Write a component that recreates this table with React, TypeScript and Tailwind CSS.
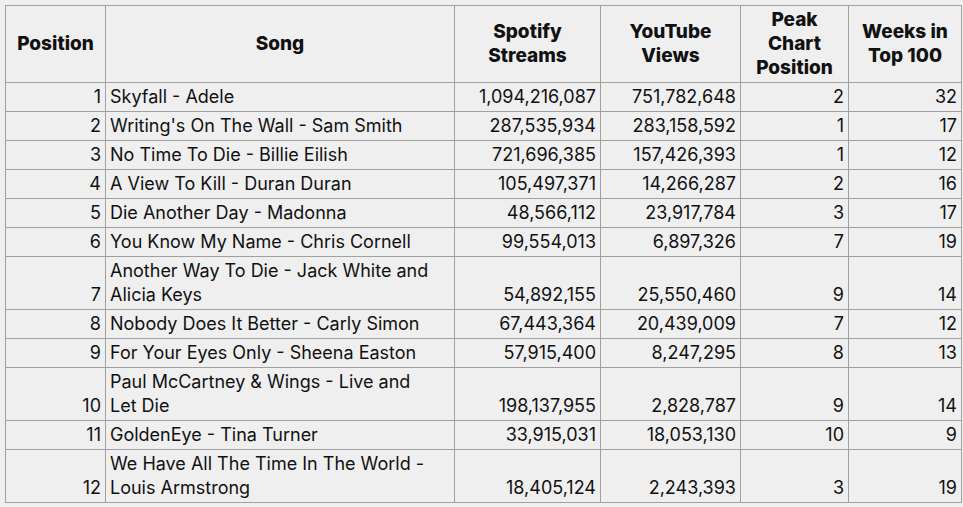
const rows: [number, string[], string, string, number, number][] = [
  [1, ["Skyfall - Adele"], "1,094,216,087", "751,782,648", 2, 32],
  [2, ["Writing's On The Wall - Sam Smith"], "287,535,934", "283,158,592", 1, 17],
  [3, ["No Time To Die - Billie Eilish"], "721,696,385", "157,426,393", 1, 12],
  [4, ["A View To Kill - Duran Duran"], "105,497,371", "14,266,287", 2, 16],
  [5, ["Die Another Day - Madonna"], "48,566,112", "23,917,784", 3, 17],
  [6, ["You Know My Name - Chris Cornell"], "99,554,013", "6,897,326", 7, 19],
  [7, ["Another Way To Die - Jack White and", "Alicia Keys"], "54,892,155", "25,550,460", 9, 14],
  [8, ["Nobody Does It Better - Carly Simon"], "67,443,364", "20,439,009", 7, 12],
  [9, ["For Your Eyes Only - Sheena Easton"], "57,915,400", "8,247,295", 8, 13],
  [10, ["Paul McCartney & Wings - Live and", "Let Die"], "198,137,955", "2,828,787", 9, 14],
  [11, ["GoldenEye - Tina Turner"], "33,915,031", "18,053,130", 10, 9],
  [12, ["We Have All The Time In The World -", "Louis Armstrong"], "18,405,124", "2,243,393", 3, 19],
];

const th = "border border-[#a0a0a0] px-[4px] py-[2px] text-center align-middle font-extrabold text-[19px]";
const td = "border border-[#a0a0a0] px-[4px] py-[2px] align-bottom";

export default function App() {
  return (
    <div className="h-[507px] w-[963px] overflow-hidden bg-[#efeff0] pl-[5px] pt-[5px] font-['Inter','Liberation_Sans',sans-serif] text-[18px] leading-[24px] text-[#111]">
      <table className="w-[956px] table-fixed border-collapse">
        <colgroup>
          <col className="w-[100px]" />
          <col className="w-[349px]" />
          <col className="w-[146px]" />
          <col className="w-[140px]" />
          <col className="w-[108px]" />
          <col className="w-[113px]" />
        </colgroup>
        <thead>
          <tr>
            <th className={th}>Position</th>
            <th className={th}>Song</th>
            <th className={th}>Spotify<br />Streams</th>
            <th className={th}>YouTube<br />Views</th>
            <th className={th}>Peak<br />Chart<br />Position</th>
            <th className={th}>Weeks in<br />Top 100</th>
          </tr>
        </thead>
        <tbody>
          {rows.map(([pos, song, spotify, youtube, peak, weeks]) => (
            <tr key={pos}>
              <td className={`${td} text-right`}>{pos}</td>
              <td className={`${td} text-left`}>
                {song.map((line, i) => (
                  <div key={i} className="whitespace-nowrap">{line}</div>
                ))}
              </td>
              <td className={`${td} text-right`}>{spotify}</td>
              <td className={`${td} text-right`}>{youtube}</td>
              <td className={`${td} text-right`}>{peak}</td>
              <td className={`${td} text-right`}>{weeks}</td>
            </tr>
          ))}
        </tbody>
      </table>
    </div>
  );
}
